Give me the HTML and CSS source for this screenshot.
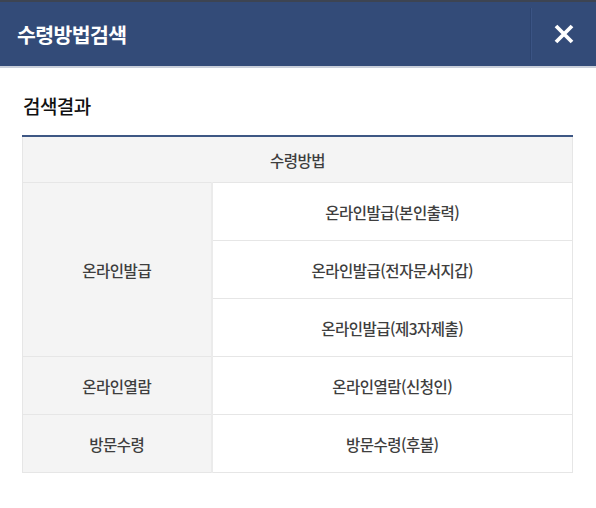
FILE: index.html
```html
<!DOCTYPE html>
<html lang="ko">
<head>
<meta charset="utf-8">
<link rel="stylesheet" href="styles.css">
</head>
<body>
<div class="popup">
  <header class="pop-head">
    <h1 class="pop-title">수령방법검색</h1>
    <button class="pop-close" aria-label="닫기">
      <svg width="22" height="22" viewBox="0 0 22 22"><path d="M3 3 L19 19 M19 3 L3 19" stroke="#fff" stroke-width="3.8" stroke-linecap="butt"/></svg>
    </button>
  </header>
  <section class="pop-body">
    <h2 class="sec-title">검색결과</h2>
    <table class="result">
      <colgroup><col class="c1"><col class="c2"></colgroup>
      <thead>
        <tr><th colspan="2">수령방법</th></tr>
      </thead>
      <tbody>
        <tr><th rowspan="3" class="side">온라인발급</th><td>온라인발급(본인출력)</td></tr>
        <tr><td>온라인발급(전자문서지갑)</td></tr>
        <tr><td>온라인발급(제3자제출)</td></tr>
        <tr><th class="side">온라인열람</th><td>온라인열람(신청인)</td></tr>
        <tr><th class="side">방문수령</th><td>방문수령(후불)</td></tr>
      </tbody>
    </table>
  </section>
</div>
</body>
</html>
```
FILE: styles.css
```css
html, body {
  margin: 0;
  padding: 0;
  background: #fff;
  font-family: "Noto Sans CJK KR", "Noto Sans", sans-serif;
}
.popup {
  width: 596px;
}
.pop-head {
  background: #334b78;
  border-top: 2px solid #3d4452;
  border-bottom: 2px solid #c9cfda;
  box-sizing: border-box;
  height: 68px;
  display: flex;
  align-items: center;
  justify-content: space-between;
}
.pop-title {
  margin: 0 0 0 17px;
  color: #fff;
  font-size: 20.5px;
  font-weight: 700;
  letter-spacing: -0.6px;
  line-height: 1;
}
.pop-close {
  width: 66px;
  height: 52px;
  background: none;
  border: none;
  border-left: 1px solid #2d4470;
  box-shadow: inset 1px 0 0 #3b5484;
  display: flex;
  align-items: center;
  justify-content: center;
  padding: 0 0 0 0;
  margin: 0;
}
.pop-body {
  padding: 27px 23px 0 22px;
}
.sec-title {
  margin: 0 0 0 1px;
  font-size: 19px;
  font-weight: 500;
  color: #111;
  letter-spacing: -0.6px;
  line-height: 22px;
  height: 22px;
}
.result {
  margin-top: 18px;
  width: 551px;
  border-collapse: collapse;
  border-top: 2px solid #3e5784;
  font-size: 15.5px;
  color: #3e3e3e;
  letter-spacing: -0.5px;
}
.result col.c1 { width: 189px; }
.result th, .result td {
  border: 1px solid #e6e6e6;
  text-align: center;
  font-weight: 500;
  padding: 0;
}
.result thead th {
  background: #f4f4f4;
  height: 45px;
}
.result tbody td, .result tbody th {
  height: 57px;
}
.result td {
  background: #fff;
}
.result th.side {
  background: #f4f4f4;
  border-right: 2px solid #ebebeb;
}
```
